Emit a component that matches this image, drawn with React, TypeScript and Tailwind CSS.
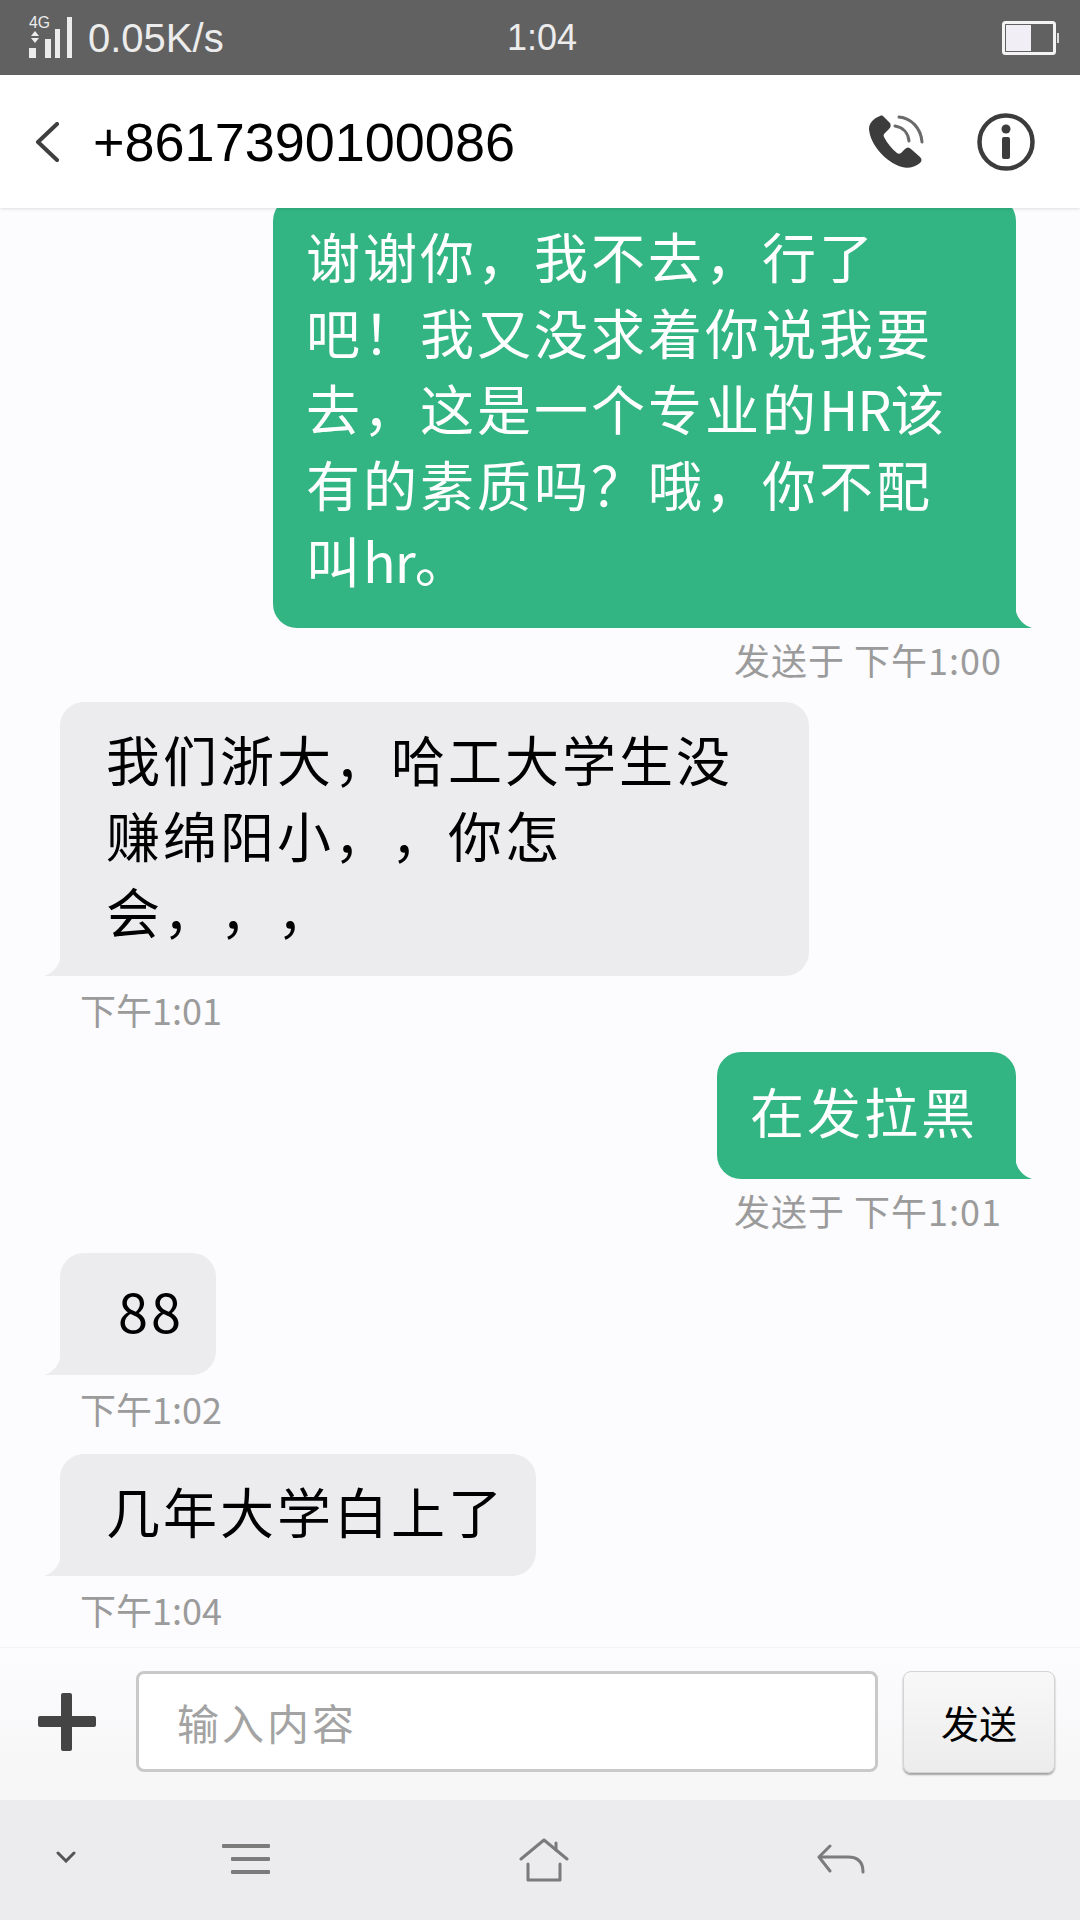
import type { ReactNode } from 'react';

const cjk = "font-['Noto_Sans_CJK_SC','Liberation_Sans',sans-serif]";

function Tail({ side, color }: { side: 'left' | 'right'; color: string }) {
  return (
    <svg
      width="17"
      height="22"
      viewBox="0 0 17 22"
      className={side === 'right' ? 'absolute bottom-0 right-[-16px]' : 'absolute bottom-0 left-[-16px]'}
      fill={color}
    >
      {side === 'right' ? <path d="M0 0C1 11 7 19 17 22H0Z" /> : <path d="M17 0C16 11 10 19 0 22H17Z" />}
    </svg>
  );
}

function SentBubble({ lines, time, width }: { lines: ReactNode[]; time: string; width: string }) {
  return (
    <div className="flex flex-col items-end mr-[64px]">
      <div className={`relative bg-[#32b583] text-white rounded-l-[24px] rounded-tr-[24px] pl-[33px] pt-[21px] pb-[30px] text-[54px] tracking-[3px] leading-[76px] [text-spacing-trim:space-all] ${width}`}>
        {lines.map((line, i) => (
          <div key={i} className="whitespace-nowrap">{line}</div>
        ))}
        <Tail side="right" color="#32b583" />
      </div>
      <div className="h-[74px] pb-[12px] flex items-center mr-[14px] text-[36px] tracking-[1px] text-[#9b9b9b] whitespace-nowrap">{time}</div>
    </div>
  );
}

function ReceivedBubble({ lines, time, width, extra, pad = 'pl-[46px]' }: { lines: string[]; time: string; width: string; extra: string; pad?: string }) {
  return (
    <div className={`flex flex-col items-start ml-[60px] ${extra}`}>
      <div className={`relative bg-[#ecebed] text-black rounded-r-[24px] rounded-tl-[24px] pt-[19px] pb-[27px] text-[54px] tracking-[3px] leading-[76px] [text-spacing-trim:space-all] ${pad} ${width}`}>
        {lines.map((line) => (
          <div key={line} className="whitespace-nowrap">{line}</div>
        ))}
        <Tail side="left" color="#ecebed" />
      </div>
      <div className="h-[71px] pb-[6px] flex items-center ml-[20px] text-[36px] text-[#9b9b9b] whitespace-nowrap">{time}</div>
    </div>
  );
}

export default function App() {
  return (
    <div className={`w-[1080px] h-[1920px] flex flex-col overflow-hidden bg-[#fcfbfe] ${cjk}`}>
      {/* Status bar */}
      <div className="relative h-[75px] shrink-0 bg-[#616161] flex items-center pl-[29px] pr-[20px] text-[#ececec]">
        <svg width="44" height="42" viewBox="0 0 44 42" className="shrink-0 mt-[-2px]" fill="#ececec">
          <text x="0" y="12" fontSize="16" fontFamily="Liberation Sans" textLength="21" lengthAdjust="spacingAndGlyphs">4G</text>
          <path d="M2 20l4-5 4 5zM2 22h8l-4 5z" />
          <rect x="0" y="32" width="7" height="10" />
          <rect x="16" y="23" width="6" height="19" />
          <rect x="26" y="13" width="5" height="29" />
          <rect x="38" y="1" width="5" height="41" />
        </svg>
        <span className="ml-[15px] text-[40px] font-['Liberation_Sans',sans-serif]">0.05K/s</span>
        <span className="absolute left-[507px] top-[16px] text-[36px] leading-[44px] font-['Liberation_Sans',sans-serif]">1:04</span>
        <svg width="58" height="34" viewBox="0 0 58 34" className="ml-auto" fill="none">
          <rect x="1.5" y="1.5" width="51" height="31" rx="2" stroke="#f4f4f4" strokeWidth="3" />
          <rect x="4" y="4" width="25" height="26" fill="#f1eff5" />
          <rect x="55" y="12" width="2" height="10" fill="#dddddd" />
        </svg>
      </div>

      {/* Header */}
      <div className="relative z-10 h-[133px] shrink-0 bg-white shadow-[0_1px_3px_rgba(0,0,0,0.12)] flex items-center pl-[34px]">
        <svg width="26" height="40" viewBox="0 0 26 40" fill="none" stroke="#3f3f3f" strokeWidth="4" strokeLinecap="round" strokeLinejoin="round">
          <path d="M23 2 4 20l19 18" />
        </svg>
        <span className="ml-[33px] text-[54px] text-black font-['Liberation_Sans',sans-serif] leading-none">+8617390100086</span>
        <svg width="56" height="54" viewBox="0 0 56 54" className="ml-auto" fill="none">
          <path
            d="M11 1C5 3 0 8 0 14c1 15 16 33 33 38 6 2 13 0 18-4 2-2 2-4 0-6l-9-8c-2-2-4-2-6 0l-4 4c-1 1-3 1-4 0-5-4-10-10-13-16-1-2 0-3 1-4l4-4c2-2 2-4 1-6L15 2c-1-1-2-2-4-1Z"
            fill="#3c3c3c"
          />
          <path d="M26 11c7 1 13 6 14 15" stroke="#6a6a6a" strokeWidth="3" strokeLinecap="round" />
          <path d="M30 2c12 1 22 11 23 25" stroke="#6a6a6a" strokeWidth="3" strokeLinecap="round" />
        </svg>
        <svg width="58" height="58" viewBox="0 0 58 58" className="ml-[52px] mr-[45px]" fill="none">
          <circle cx="29" cy="29" r="26.5" stroke="#3c3c3c" strokeWidth="4.5" />
          <circle cx="29" cy="16" r="4.5" fill="#3c3c3c" />
          <rect x="25" y="24" width="8" height="22" rx="2" fill="#3c3c3c" />
        </svg>
      </div>

      {/* Messages */}
      <div className="flex-1 min-h-0 overflow-hidden flex flex-col justify-end">
        <SentBubble
          width="w-[743px]"
          lines={[
            '谢谢你，我不去，行了',
            '吧！我又没求着你说我要',
            <>去，这是一个专业的<span className="tracking-[-1px]">HR</span>该</>,
            '有的素质吗？哦，你不配',
            <>叫<span className="tracking-[-1px]">hr</span>。</>,
          ]}
          time="发送于 下午1:00"
        />
        <ReceivedBubble
          width="w-[749px]"
          extra="mb-[5px]"
          lines={['我们浙大，哈工大学生没', '赚绵阳小，，你怎', '会，，，']}
          time="下午1:01"
        />
        <SentBubble width="w-[299px]" lines={['在发拉黑']} time="发送于 下午1:01" />
        <ReceivedBubble width="w-[156px]" extra="mb-[8px]" pad="pl-[58px]" lines={['88']} time="下午1:02" />
        <ReceivedBubble width="w-[476px]" extra="" lines={['几年大学白上了']} time="下午1:04" />
      </div>

      {/* Composer */}
      <div className="h-[153px] shrink-0 pb-[5px] bg-gradient-to-b from-[#fcfbfe] to-[#f6f6f6] border-t border-[#f3f3f3] flex items-center pl-[38px]">
        <svg width="58" height="58" viewBox="0 0 58 58" className="shrink-0" fill="#444444">
          <rect x="0" y="23" width="58" height="11" rx="2" />
          <rect x="23" y="0" width="11" height="58" rx="2" />
        </svg>
        <div className="ml-[40px] w-[742px] h-[101px] bg-white border-[3px] border-[#c9c9c9] rounded-[8px] flex items-center pl-[38px] text-[42px] tracking-[3px] text-[#a3a3a3]">
          输入内容
        </div>
        <button className="ml-[25px] w-[152px] h-[102px] rounded-[8px] border border-[#d4d4d4] bg-gradient-to-b from-[#f8f8f8] to-[#ececec] shadow-[0_2px_2px_rgba(0,0,0,0.35)] text-[38px] text-black">
          发送
        </button>
      </div>

      {/* Navigation bar */}
      <div className="h-[120px] shrink-0 bg-[#ecebed] relative flex items-center">
        <svg width="20" height="12" viewBox="0 0 20 12" className="ml-[56px] mb-[7px]" fill="none" stroke="#555555" strokeWidth="3" strokeLinecap="round">
          <path d="M2 2l8 8 8-8" />
        </svg>
        <svg width="48" height="30" viewBox="0 0 48 30" className="ml-[146px] mb-[2px]" fill="#7b7b7b">
          <rect x="0" y="0" width="48" height="4" rx="1" />
          <rect x="9" y="13" width="39" height="4" rx="1" />
          <rect x="9" y="26" width="39" height="4" rx="1" />
        </svg>
        <svg width="50" height="44" viewBox="0 0 50 44" className="ml-[249px]" fill="none" stroke="#7b7b7b" strokeWidth="3" strokeLinecap="round" strokeLinejoin="round">
          <path d="M2 21 25 2l23 19" />
          <path d="M37 5v7" />
          <path d="M9 26v16h32V26" />
        </svg>
        <svg width="48" height="30" viewBox="0 0 48 30" className="ml-[248px] mb-[2px]" fill="none" stroke="#7b7b7b" strokeWidth="3" strokeLinecap="round" strokeLinejoin="round">
          <path d="M13 2 2 13l11 14" />
          <path d="M3 13h28c10 0 15 5 15 15" />
        </svg>
      </div>
    </div>
  );
}
